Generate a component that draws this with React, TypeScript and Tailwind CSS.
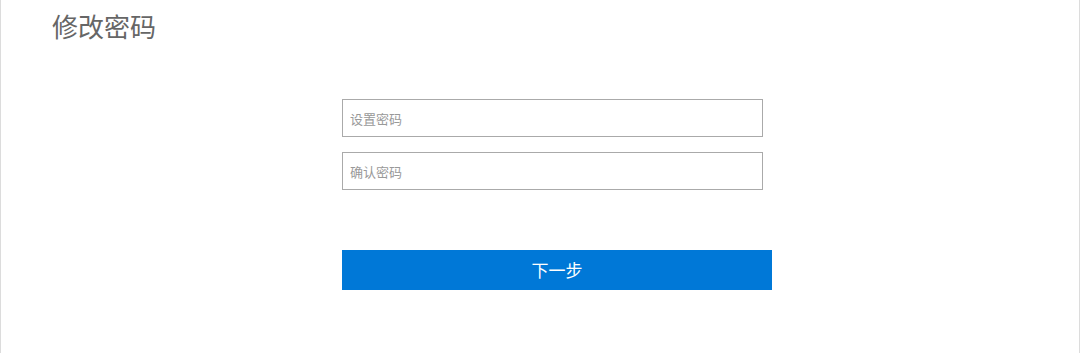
export default function App() {
  return (
    <div
      className="h-[353px] w-[1080px] border-x border-[#dcdcdc] bg-white"
      style={{ fontFamily: '"Microsoft YaHei", "Noto Sans CJK SC", sans-serif' }}
    >
      <h1 className="pl-[51px] pt-[8px] text-[26px] font-normal leading-[36px] text-[#666]">修改密码</h1>

      <form className="ml-[341px] mt-[55px] flex w-[430px] flex-col">
        <input
          type="password"
          placeholder="设置密码"
          className="h-[38px] w-[421px] border border-[#aaa] px-[7px] text-[13px] text-[#333] outline-none placeholder:text-[#999]"
        />
        <input
          type="password"
          placeholder="确认密码"
          className="mt-[15px] h-[38px] w-[421px] border border-[#aaa] px-[7px] text-[13px] text-[#333] outline-none placeholder:text-[#999]"
        />
        <button
          type="button"
          className="mt-[60px] h-[40px] w-[430px] bg-[#0078d7] text-[17px] text-white"
        >
          下一步
        </button>
      </form>
    </div>
  );
}
